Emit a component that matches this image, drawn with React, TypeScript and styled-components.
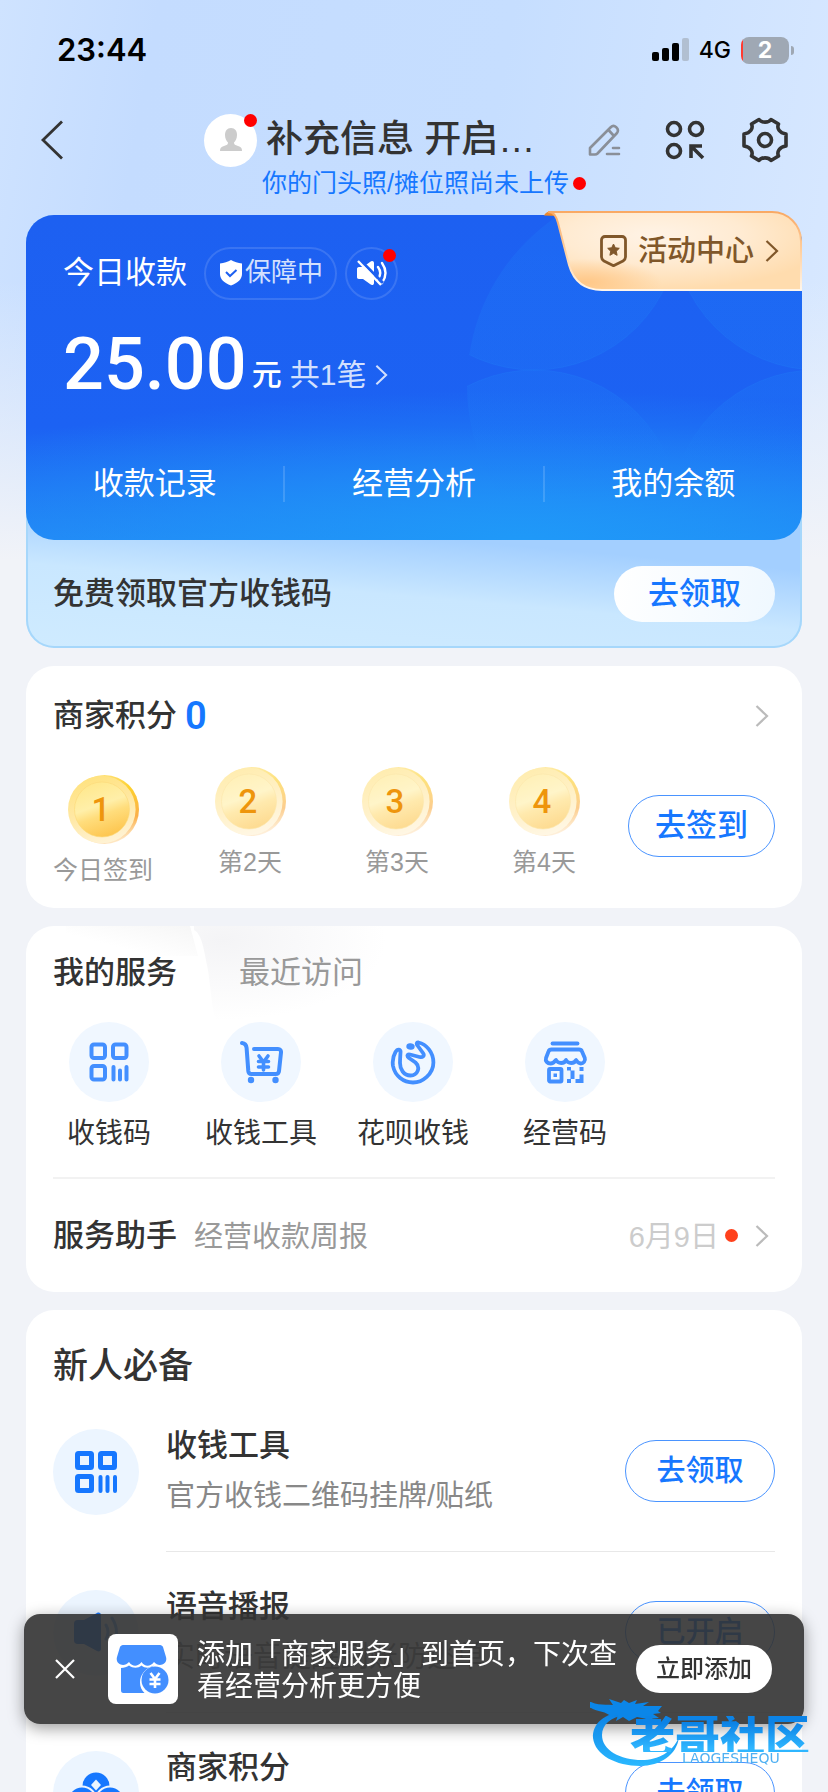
import React from "react";
import styled, { createGlobalStyle, css } from "styled-components";

const BLUE = "#1677ff";
const INK = "#333333";

const GlobalStyle = createGlobalStyle`
  *, *::before, *::after { box-sizing: border-box; }
  body {
    margin: 0;
    background: #f1f3f8;
    color: ${INK};
    font-family: "Liberation Sans", "Noto Sans CJK SC", sans-serif;
    line-height: 1.2;
  }
  button {
    margin: 0;
    padding: 0;
    border: 0;
    background: none;
    color: inherit;
    font: inherit;
    cursor: pointer;
  }
  a { color: inherit; text-decoration: none; }
  h1, h2, h3, p, ul { margin: 0; padding: 0; }
  h1, h2, h3 { font-weight: 500; }
  ul { list-style: none; }
  svg { display: block; flex: none; }
`;

/* ---------- page shell ---------- */

const Screen = styled.div`
  height: 100vh;
  overflow-y: auto;
  scrollbar-width: none;
  background:
    linear-gradient(180deg, rgba(241, 243, 248, 0) 280px, #f1f3f8 560px),
    linear-gradient(100deg, #cfe3ff 0%, #c4dcff 14%, #c6deff 45%, #d6e7ff 75%, #e6f1ff 100%);
`;

const StatusBar = styled.div`
  display: flex;
  align-items: center;
  height: 100px;
  padding: 0 39px 0 57px;
  color: #000;
`;

const Clock = styled.time`
  margin-right: auto;
  font: 600 31px/40px Inter, sans-serif;
`;

const Network = styled.span`
  margin: 0 10px 0 9px;
  font: 500 23px/30px Inter, sans-serif;
`;

const Battery = styled.span`
  position: relative;
  width: 48px;
  height: 27px;
  border-radius: 8px;
  background: linear-gradient(90deg, #ff3b30 2px, #9fa8b4 2px);
  color: #fff;
  font: 700 23px/27px Inter, sans-serif;
  text-align: center;
  &::after {
    content: "";
    position: absolute;
    right: -5px;
    top: 9px;
    width: 3px;
    height: 9px;
    border-radius: 0 4px 4px 0;
    background: #9fa8b4;
  }
`;

const Header = styled.header`
  display: flex;
  align-items: flex-start;
  padding: 14px 40px 17px;
`;

const IconButton = styled.button`
  display: flex;
  align-items: center;
  height: 52px;
`;

const Profile = styled.div`
  margin: 0 2px 0 auto;
`;

const ProfileRow = styled.div`
  display: flex;
  align-items: center;
  gap: 9px;
  height: 52px;
`;

const Avatar = styled.span`
  position: relative;
  display: grid;
  place-items: center;
  width: 53px;
  height: 53px;
  border-radius: 50%;
  background: #fff;
`;

const RedDot = styled.i<{ $tone?: string }>`
  flex: none;
  width: 13px;
  height: 13px;
  border-radius: 50%;
  background: ${(p) => p.$tone ?? "#ff0000"};
`;

const CornerDot = styled(RedDot)`
  position: absolute;
  top: 0;
  right: 0;
`;

const ShopName = styled.h1`
  font-size: 37px;
  line-height: 48px;
`;

const ShopHint = styled.a`
  display: flex;
  align-items: center;
  gap: 4px;
  margin: 2px 0 0 58px;
  color: ${BLUE};
  font-size: 25px;
  line-height: 30px;
`;

const Tools = styled.div`
  display: flex;
  gap: 37px;
`;

const Main = styled.main`
  display: flex;
  flex-direction: column;
  gap: 18px;
  padding: 0 26px 40px;
`;

/* ---------- takings card ---------- */

const Hero = styled.section`
  position: relative;
  border-radius: 28px;
  background: linear-gradient(185deg, #a3cfff 71%, #c9e7ff 83%, #cfebff 100%);
  box-shadow: inset 0 0 0 2px #a6d7fb;
`;

const Takings = styled.div`
  position: relative;
  overflow: hidden;
  padding: 32px 0 36px;
  border-radius: 28px;
  background:
    radial-gradient(ellipse 90% 46% at 64% 100%, #1f99f8 0%, rgba(31, 153, 248, 0.5) 50%, rgba(31, 153, 248, 0) 100%),
    linear-gradient(180deg, #1d60f1 0%, #1c62f3 65%, #2385f5 100%);
  color: #fff;
`;

const Petals = styled.svg`
  position: absolute;
  top: 0;
  right: 0;
`;

const TakingsTop = styled.div`
  position: relative;
  display: flex;
  align-items: center;
  height: 52px;
  padding: 0 37px;
  font-size: 31px;
`;

const Guard = styled.button`
  display: flex;
  align-items: center;
  gap: 2px;
  height: 53px;
  margin: 0 8px 0 17px;
  padding: 0 12px 0 13px;
  border: 2px solid rgba(255, 255, 255, 0.13);
  border-radius: 27px;
  color: #d3e0fd;
  font-size: 26px;
`;

const Mute = styled.button`
  position: relative;
  display: grid;
  place-items: center;
  width: 53px;
  height: 53px;
  border: 2px solid rgba(255, 255, 255, 0.13);
  border-radius: 50%;
`;

const Amount = styled.a`
  position: relative;
  display: flex;
  align-items: flex-end;
  height: 80px;
  margin-top: 26px;
  padding: 0 37px;
  font-size: 30px;
  line-height: 60px;
`;

const Sum = styled.strong`
  margin-right: 5px;
  font: 500 72px/80px Roboto, sans-serif;
`;

const Unit = styled.span`
  font-weight: 500;
`;

const Orders = styled.span`
  display: flex;
  align-items: center;
  gap: 9px;
  margin-left: 8px;
  color: #d3e0fd;
`;

const Actions = styled.nav`
  position: relative;
  display: flex;
  align-items: center;
  height: 40px;
  margin-top: 59px;
`;

const Action = styled.a`
  flex: 1;
  font-size: 31px;
  line-height: 36px;
  text-align: center;
  & + & { border-left: 2px solid rgba(255, 255, 255, 0.15); }
`;

const EventTag = styled.a`
  position: absolute;
  top: -4px;
  right: 0;
  display: flex;
  align-items: center;
  gap: 11px;
  width: 258px;
  height: 80px;
  padding-left: 56px;
  color: #80572a;
  font-size: 29px;
  font-weight: 500;
`;

const TagShape = styled.svg`
  position: absolute;
  inset: 0;
`;

const TagPart = styled.span`
  position: relative;
`;

const Offer = styled.div`
  display: flex;
  align-items: center;
  justify-content: space-between;
  height: 108px;
  padding: 0 27px;
  font-size: 31px;
  font-weight: 500;
`;

const OfferButton = styled.button`
  width: 161px;
  height: 56px;
  border-radius: 28px;
  background: linear-gradient(100deg, #fff, #eff8ff);
  color: ${BLUE};
`;

/* ---------- white cards ---------- */

const Card = styled.section`
  position: relative;
  padding: 29px 27px 0;
  border-radius: 28px;
  background: #fff;
`;

const CardRow = styled.div`
  display: flex;
  align-items: center;
  height: 42px;
`;

const Title = styled.h2`
  font-size: 31px;
  line-height: 40px;
`;

const Points = styled.b`
  margin: 0 auto 0 8px;
  color: ${BLUE};
  font: 600 38px/40px Roboto, sans-serif;
`;

const ChevronSlot = styled.span<{ $gap?: number }>`
  margin: 0 6px 0 ${(p) => p.$gap ?? 0}px;
`;

const CheckIn = styled.div`
  display: flex;
  align-items: center;
  justify-content: space-between;
  padding: 29px 0 23px;
`;

const Days = styled.ul`
  display: flex;
  align-items: flex-start;
  gap: 47px;
`;

const Day = styled.li<{ $today: boolean }>`
  display: flex;
  flex-direction: column;
  align-items: center;
  gap: 10px;
  width: 100px;
  padding-top: ${(p) => (p.$today ? 8 : 0)}px;
  color: #999;
  font-size: 25px;
  line-height: 30px;
`;

const Coin = styled.span`
  position: relative;
  display: grid;
  place-items: center;
  width: 71px;
  height: 71px;
  padding-right: 4px;
  color: #ee950c;
  font: 500 33px/40px Roboto, sans-serif;
  svg { position: absolute; inset: 0; }
  b { position: relative; font-weight: 500; }
`;

const OutlineButton = styled.button<{ $size: "l" | "m" }>`
  flex: none;
  height: 62px;
  border: 1px solid #4a94ff;
  border-radius: 31px;
  color: ${BLUE};
  font-weight: 500;
  ${(p) =>
    p.$size === "l"
      ? css`
          width: 147px;
          font-size: 31px;
        `
      : css`
          width: 150px;
          font-size: 29px;
        `}
`;

const TabShade = styled.svg`
  position: absolute;
  top: 0;
  left: 0;
`;

const Tabs = styled.div`
  position: relative;
  display: flex;
  gap: 62px;
`;

const Tab = styled.button<{ $on?: boolean }>`
  color: ${(p) => (p.$on ? INK : "#999")};
  font-size: 31px;
  font-weight: ${(p) => (p.$on ? 500 : 400)};
  line-height: 36px;
`;

const Services = styled.ul`
  display: flex;
  gap: 40px;
  padding: 31px 0 25px;
  border-bottom: 2px solid #f2f2f2;
`;

const Service = styled.a`
  display: flex;
  flex-direction: column;
  align-items: center;
  gap: 14px;
  width: 112px;
  font-size: 28px;
  line-height: 36px;
  white-space: nowrap;
`;

const Disc = styled.span<{ $size: number; $tone: string }>`
  display: grid;
  flex: none;
  place-items: center;
  width: ${(p) => p.$size}px;
  height: ${(p) => p.$size}px;
  border-radius: 50%;
  background: ${(p) => p.$tone};
`;

const Helper = styled.a`
  display: flex;
  align-items: center;
  height: 113px;
`;

const HelperNote = styled.span`
  margin: 4px auto 0 17px;
  color: #999;
  font-size: 29px;
`;

const HelperDate = styled.time`
  margin: 4px 6px 0 0;
  color: #ccc;
  font-size: 29px;
`;

const StarterTitle = styled.h2`
  padding: 7px 0 5px;
  font-size: 35px;
  line-height: 40px;
`;

const Starter = styled.li`
  display: flex;
  align-items: center;
  gap: 27px;
`;

const StarterBody = styled.div`
  display: flex;
  flex: 1;
  align-items: center;
  justify-content: space-between;
  height: 161px;
  border-bottom: 1px solid #e8e8e8;
`;

const StarterText = styled.div`
  display: flex;
  flex-direction: column;
  gap: 10px;
  line-height: 40px;
  h3 { font-size: 31px; }
  p { color: #888; font-size: 29px; }
`;

/* ---------- floating layers ---------- */

const Toast = styled.aside`
  position: fixed;
  right: 24px;
  bottom: 68px;
  left: 24px;
  display: flex;
  align-items: center;
  height: 110px;
  padding: 0 32px 0 31px;
  border-radius: 16px;
  background: rgba(50, 50, 50, 0.9);
  box-shadow: 0 4px 16px rgba(0, 0, 0, 0.4);
  color: #fff;
`;

const AppIcon = styled.span`
  display: grid;
  flex: none;
  place-items: center;
  width: 70px;
  height: 70px;
  margin: 0 19px 0 33px;
  border-radius: 8px;
  background: #fff;
`;

const ToastText = styled.p`
  flex: 1;
  margin-right: 16px;
  padding-top: 3px;
  font-size: 28px;
  line-height: 32px;
`;

const AddButton = styled.button`
  width: 136px;
  height: 48px;
  border-radius: 24px;
  background: #fff;
  color: ${INK};
  font-size: 24px;
  font-weight: 500;
`;

const Watermark = styled.div`
  position: fixed;
  right: 16px;
  bottom: 20px;
  width: 222px;
  height: 76px;
  padding: 20px 0 0 40px;
  pointer-events: none;
`;

const WatermarkArt = styled.svg`
  position: absolute;
  inset: 0;
`;

const WatermarkName = styled.div`
  position: relative;
  background: linear-gradient(180deg, #0c83e6 20%, #2fb6ff 90%);
  background-clip: text;
  color: transparent;
  font: 900 45px/36px "Noto Sans CJK SC", sans-serif;
  white-space: nowrap;
`;

const WatermarkSub = styled.div`
  position: relative;
  padding-left: 52px;
  color: #4fb0f2;
  font: 400 14px/12px "DejaVu Sans", sans-serif;
`;

/* ---------- icons ---------- */

const Chevron = ({ color, w = 14, h = 22 }: { color: string; w?: number; h?: number }) => (
  <svg width={w} height={h} viewBox="0 0 14 22" fill="none" stroke={color} strokeWidth="2.2">
    <path d="M1.5 1 12 11 1.5 21" />
  </svg>
);

const CoinArt = ({ id, today }: { id: string; today: boolean }) => (
  <svg width="71" height="71" viewBox="0 0 71 71" opacity={today ? 1 : 0.62}>
    <defs>
      <linearGradient id={`${id}e`} x1="0.4" y1="0" x2="0.7" y2="1">
        <stop offset="0" stopColor="#ffe27a" />
        <stop offset="0.3" stopColor="#fdd02c" />
        <stop offset="0.7" stopColor="#fbb04a" />
        <stop offset="1" stopColor="#fff0d8" />
      </linearGradient>
      <linearGradient id={`${id}r`} x1="0.3" y1="0" x2="0.6" y2="1">
        <stop offset="0" stopColor="#ffe27e" />
        <stop offset="0.55" stopColor="#ffe9a8" />
        <stop offset="1" stopColor="#fff3d6" />
      </linearGradient>
      <linearGradient id={`${id}f`} x1="0.3" y1="0" x2="0.65" y2="1">
        <stop offset="0" stopColor="#ffe88c" />
        <stop offset="0.42" stopColor="#ffefa9" />
        <stop offset="0.6" stopColor="#ffdd7c" />
        <stop offset="1" stopColor="#fdc44c" />
      </linearGradient>
    </defs>
    <circle cx="36.5" cy="35.5" r="34.5" fill={`url(#${id}e)`} />
    <circle cx="33.8" cy="35.5" r="33.8" fill={`url(#${id}r)`} />
    <circle cx="34" cy="35.5" r="27.500" fill={`url(#${id}f)`} stroke="#fbd878" strokeOpacity="0.6" />
  </svg>
);

const QrLight = () => (
  <svg width="40" height="40" viewBox="0 0 40 40" fill="none" stroke="#438fff" strokeWidth="4">
    <rect x="2.5" y="2.5" width="13.5" height="13.5" rx="2.5" />
    <rect x="24" y="2.5" width="13.5" height="13.5" rx="2.5" />
    <rect x="2.5" y="24" width="13.5" height="13.5" rx="2.5" />
    <path strokeLinecap="round" d="M24.5 25v12.5M31 28.5v9M37.5 25v12.5" />
  </svg>
);

const Cart = () => (
  <svg width="44" height="44" viewBox="0 0 44 44" fill="none" stroke="#438fff" strokeLinecap="round" strokeLinejoin="round">
    <path strokeWidth="4" d="M3 3c3 .3 4.300 1.500 4.600 5l1.700 23c.2 2 1.200 3 3 3h24.500c2 0 3-1 3.200-3l2-18.500c.2-2-.8-3.500-3-3.500H15" />
    <path strokeWidth="3.600" d="m20 16 4.500 6 4.500-6M19.500 21.500h10M19.500 27h10M24.500 22v8" />
    <circle cx="12" cy="40" r="3.200" fill="#438fff" stroke="none" />
    <circle cx="36.500" cy="40" r="3.200" fill="#438fff" stroke="none" />
  </svg>
);

const Huabei = () => (
  <svg width="46" height="46" viewBox="-1 -1 46 46" fill="none" stroke="#438fff" strokeWidth="3.800" strokeLinejoin="round">
    <path d="M9.500 12.500C10 9 6.500 8.500 4.500 12 1.500 17 1.400 22 2 26c2 10 10.500 16.500 20 16.500S42.400 34 42.400 22.500C42.400 12 35 4 27.500 2.500c-2-.3-2.200 1.500-1 3l5.500 7.500c2 3-.5 4.800-3.500 4L19 14.500c-2.800-.6-3.500 1.500-1 3.500l6.500 4.500c5.500 5 2 13-5 13C12.500 35.500 9 29 9 23c0-4 .3-7 .5-10.500Z" />
    <ellipse cx="19.500" cy="6.500" rx="4.200" ry="3.200" fill="#438fff" stroke="none" transform="rotate(8 19.500 6.500)" />
  </svg>
);

const StoreQr = () => (
  <svg width="46" height="46" viewBox="-1 -1 46 46" fill="none" stroke="#438fff" strokeWidth="3.800" strokeLinejoin="round">
    <path strokeLinecap="round" d="M9.500 3.500h25" />
    <path d="M8.500 9.500h27.500c1.500 0 2.500.6 3 2l2.800 6.500c1 3-1.500 5.500-4 5.500-2.500 0-3.500-1.500-4.800-3.500-1.500 4-8 4-10 0-1.500 4-8 4-10 0-1.500 2-3 3.500-5.500 3.500-3 0-5.500-2.500-4.500-5.500L5.500 11.500c.5-1.400 1.500-2 3-2Z" />
    <rect x="6" y="29" width="12.500" height="12.500" rx="1" />
    <path strokeWidth="0" fill="#438fff" d="M10.500 33.500h3.500v3.500h-3.500zM24 27h4v3.500h-4zM27.500 30.500h4v8.500h-4zM24 39h4v4h-4zM36.500 27h4v4h-4zM36.500 34.500h4v8.500H32.500v-4h4z" />
  </svg>
);

const QrBold = () => (
  <svg width="44" height="44" viewBox="0 0 44 44" fill="none" stroke={BLUE} strokeWidth="5">
    <rect x="3.500" y="3.500" width="14" height="14" rx="1" />
    <rect x="26.500" y="3.500" width="14" height="14" rx="1" />
    <rect x="3.500" y="26.500" width="14" height="14" rx="1" />
    <path strokeWidth="4" strokeLinecap="round" d="M26.500 27v14M33.500 27v14M41 27v14" />
  </svg>
);

const Speaker = () => (
  <svg width="46" height="42" viewBox="0 0 46 42">
    <path fill={BLUE} d="M5 8h6L24 1c2-1 4 0 4 2v34c0 2-2 3-4 2l-13-7H5c-3 0-4-1.500-4-4V12c0-2.500 1-4 4-4Z" />
    <path fill="none" stroke={BLUE} strokeWidth="3" strokeLinecap="round" opacity="0.600" d="M33 13q4 7 0 14M39 6q9 14 0 29" />
  </svg>
);

const Clover = () => (
  <svg width="50" height="46" viewBox="0 0 50 46">
    <g fill={BLUE} stroke="#ecf5ff" strokeWidth="2">
      <circle cx="25" cy="15" r="14.500" />
      <circle cx="11" cy="30" r="14.500" />
      <circle cx="39" cy="30" r="14.500" />
    </g>
    <path fill="#ecf5ff" d="m25 8.500 5 5.500-5 5.500-5-5.500z" />
  </svg>
);

const StoreApp = () => (
  <svg width="54" height="52" viewBox="0 0 54 52">
    <path fill="#438fff" d="M7 2h37c1.500 0 2.500 1 3 2l3 10c2 7-7 11-12 5-4 5-9 5-12.500 0-4 5-9 5-12.500 0-5 6-14 2-12-5L4 4c.5-1 1.500-2 3-2Z" />
    <path fill="#438fff" d="M5 25c3 0 6-1 8-2.500 4 3 9 3 12.500 0 3.500 3 8 3 12.500 0-9 3-14 9-14 17 0 4 1.500 8 4.500 10.500H7.500C5.500 50 5 49 5 47Z" />
    <circle cx="39" cy="37" r="13.500" fill="#438fff" />
    <path fill="none" stroke="#fff" strokeWidth="2.600" d="m34.500 30 4.500 6 4.500-6M33.500 36.500h11M33.500 41h11M39 36v9" />
  </svg>
);

/* ---------- data ---------- */

const days = [
  { n: 1, label: "今日签到" },
  { n: 2, label: "第2天" },
  { n: 3, label: "第3天" },
  { n: 4, label: "第4天" },
];

const services = [
  { label: "收钱码", icon: <QrLight /> },
  { label: "收钱工具", icon: <Cart /> },
  { label: "花呗收钱", icon: <Huabei /> },
  { label: "经营码", icon: <StoreQr /> },
];

const starters = [
  { title: "收钱工具", note: "官方收钱二维码挂牌/贴纸", action: "去领取", icon: <QrBold /> },
  { title: "语音播报", note: "实时语音提醒到账防逃单", action: "已开启", icon: <Speaker /> },
  { title: "商家积分", note: "签到领积分兑好礼", action: "去领取", icon: <Clover /> },
];

export default function App() {
  return (
    <Screen>
      <GlobalStyle />
      <StatusBar>
        <Clock>23:44</Clock>
        <svg width="38" height="24" viewBox="0 0 38 24">
          <rect x="0" y="14" width="7" height="9" rx="2" />
          <rect x="10" y="10" width="7" height="13" rx="2" />
          <rect x="20" y="5" width="7" height="18" rx="2" />
          <rect x="30" y="0" width="7" height="23" rx="2" fill="#b1bfd1" />
        </svg>
        <Network>4G</Network>
        <Battery>2</Battery>
      </StatusBar>

      <Header>
        <IconButton aria-label="返回">
          <svg width="26" height="40" viewBox="0 0 26 40" fill="none" stroke="#333" strokeWidth="2.800">
            <path d="M22 1.500 3 20 22 38.500" />
          </svg>
        </IconButton>
        <Profile>
          <ProfileRow>
            <Avatar>
              <svg width="24" height="26" viewBox="0 0 24 26" fill="#ccc">
                <path d="M12 1c4 0 6 3 6 7 0 3.500-1.500 6-3 7.500 0 2 1 2.500 4 3.500 3 1 4 2 4 5H1c0-3 1-4 4-5 3-1 4-1.500 4-3.500C7.500 14 6 11.500 6 8c0-4 2-7 6-7Z" />
              </svg>
              <CornerDot />
            </Avatar>
            <ShopName>补充信息 开启…</ShopName>
          </ProfileRow>
          <ShopHint href="#photo">
            你的门头照/摊位照尚未上传
            <RedDot />
          </ShopHint>
        </Profile>
        <Tools>
          <IconButton aria-label="编辑">
            <svg width="40" height="34" viewBox="0 0 40 34" fill="none" stroke="#8a8f98" strokeWidth="2.600" strokeLinejoin="round" strokeLinecap="round">
              <path d="M2 31.500v-6.500L23 4c3-3 9 1.500 6 6L9.500 30.500c-.6.600-1.500 1-2.500 1ZM20.500 7l5.500 6" />
              <path d="M25 25h6M19 31h12" />
            </svg>
          </IconButton>
          <IconButton aria-label="扫一扫">
            <svg width="40" height="40" viewBox="0 0 40 40" fill="none" stroke="#333" strokeWidth="3.600">
              <circle cx="9" cy="9" r="6.500" />
              <circle cx="31" cy="9" r="6.500" />
              <circle cx="9" cy="31" r="6.500" />
              <path d="M26 38V26h11M26.500 26.500 38 38" />
            </svg>
          </IconButton>
          <IconButton aria-label="设置">
            <svg width="46" height="46" viewBox="0 0 46 46" fill="none" stroke="#333" strokeWidth="3.600" strokeLinejoin="round">
              <path d="M17 2.500c2.500 3.500 9.500 3.500 12 0l7.500 4.500c-2 4.500 1 9 7.500 10v12c-6.500 1-9.500 5.500-7.500 10L29 43.500c-2.500-3.500-9.500-3.500-12 0L9.500 39C11.500 34.500 8.500 30 2 29V17c6.500-1 9.500-5.500 7.500-10Z" />
              <circle cx="23" cy="23" r="6.500" />
            </svg>
          </IconButton>
        </Tools>
      </Header>

      <Main>
        <Hero>
          <Takings>
            <Petals width="336" height="325" viewBox="0 0 336 325">
              <defs>
                <clipPath id="ring">
                  <circle cx="204" cy="170" r="203" />
                </clipPath>
                <linearGradient id="petalFill" gradientUnits="userSpaceOnUse" x1="0" y1="0" x2="0" y2="300">
                  <stop offset="0" stopColor="#1f80f8" stopOpacity="0.240" />
                  <stop offset="0.600" stopColor="#1f80f8" stopOpacity="0.260" />
                  <stop offset="0.950" stopColor="#1f80f8" stopOpacity="0" />
                </linearGradient>
              </defs>
              <g clipPath="url(#ring)" fill="url(#petalFill)" stroke="url(#petalFill)">
                <circle cx="68" cy="10" r="145" />
                <circle cx="352" cy="10" r="145" />
                <circle cx="68" cy="300" r="145" />
                <circle cx="350" cy="300" r="145" />
              </g>
            </Petals>
            <TakingsTop>
              今日收款
              <Guard>
                <svg width="24" height="26" viewBox="0 0 24 26">
                  <path fill="#fff" d="M12 0c3 2 7 3 11 3.500V14c0 5-4 9-11 11.500C5 23 1 19 1 14V3.500C5 3 9 2 12 0Z" />
                  <path fill="none" stroke="#1d60f1" strokeWidth="2" d="m7 12 4 4 6.500-6" />
                </svg>
                保障中
              </Guard>
              <Mute aria-label="语音播报已关闭">
                <svg width="32" height="28" viewBox="0 0 32 28">
                  <path fill="#fff" d="M3 8h4l7-5c2-2 4-1 4 1v20c0 2-2 3-4 1l-7-5H3c-1.500 0-2-1-2-2v-8c0-1 .5-2 2-2Z" />
                  <path fill="none" stroke="#fff" strokeWidth="2.400" strokeLinecap="round" d="M22 8q4.500 6 0 12M26 4q7 10 0 20" />
                  <path stroke="#1d60f1" strokeWidth="3" d="m4 1 23 23" />
                  <path stroke="#fff" strokeWidth="2.400" d="m2 2 23 24" />
                </svg>
                <CornerDot />
              </Mute>
            </TakingsTop>
            <Amount href="#today">
              <Sum>25.00</Sum>
              <Unit>元</Unit>
              <Orders>
                共1笔
                <Chevron color="#d3e0fd" w={13} />
              </Orders>
            </Amount>
            <Actions>
              <Action href="#records">收款记录</Action>
              <Action href="#analysis">经营分析</Action>
              <Action href="#balance">我的余额</Action>
            </Actions>
          </Takings>
          <EventTag href="#events">
            <TagShape width="258" height="80" viewBox="0 0 258 80">
              <defs>
                <radialGradient id="tagFill" cx="0.420" cy="0.300" r="0.700">
                  <stop offset="0" stopColor="#fff3e6" />
                  <stop offset="0.500" stopColor="#ffebd2" />
                  <stop offset="1" stopColor="#ffdcae" />
                </radialGradient>
                <radialGradient id="tagGlow" cx="0.150" cy="0.900" r="0.300">
                  <stop offset="0" stopColor="#ffc583" stopOpacity="0.900" />
                  <stop offset="1" stopColor="#ffc583" stopOpacity="0" />
                </radialGradient>
                <linearGradient id="tagEdge" x1="0" y1="0" x2="0" y2="1">
                  <stop offset="0" stopColor="#f9a964" />
                  <stop offset="0.500" stopColor="#ffd0a0" />
                  <stop offset="1" stopColor="#fff6ea" />
                </linearGradient>
              </defs>
              <path d="M0 4.500C2 1 5 0 9 0s5 3 5 5Z" fill="#ee8a2c" />
              <path d="M4 1h224a29 29 0 0 1 29 29v49H58C38 79 29 68 25 54L14 12C12 5 10 1 4 1Z" fill="url(#tagFill)" />
              <path d="M4 1h224a29 29 0 0 1 29 29v49H58C38 79 29 68 25 54L14 12C12 5 10 1 4 1Z" fill="url(#tagGlow)" stroke="url(#tagEdge)" strokeWidth="2" />
            </TagShape>
            <TagPart>
              <svg width="27" height="32" viewBox="0 0 27 32" fill="none" stroke="#80572a" strokeWidth="2.800" strokeLinejoin="round">
                <path d="M5 1.500h17c2 0 3.500 1.500 3.500 3.500v17c0 2-1 3-2.500 4l-9.500 4.700L4 26c-1.500-1-2.500-2-2.500-4V5c0-2 1.500-3.500 3.500-3.500Z" />
                <path fill="#80572a" strokeWidth="1" d="m13.500 9 1.800 3.800 4 .5-3 2.900.8 4.100-3.600-2-3.600 2 .8-4.100-3-2.900 4-.5z" />
              </svg>
            </TagPart>
            <TagPart>活动中心</TagPart>
            <TagPart>
              <Chevron color="#80572a" />
            </TagPart>
          </EventTag>
          <Offer>
            免费领取官方收钱码
            <OfferButton>去领取</OfferButton>
          </Offer>
        </Hero>

        <Card>
          <CardRow>
            <Title>商家积分</Title>
            <Points>0</Points>
            <ChevronSlot>
              <Chevron color="#bbb" />
            </ChevronSlot>
          </CardRow>
          <CheckIn>
            <Days>
              {days.map((d, i) => (
                <Day key={d.n} $today={i === 0}>
                  <Coin>
                    <CoinArt id={`coin${d.n}`} today={i === 0} />
                    <b>{d.n}</b>
                  </Coin>
                  {d.label}
                </Day>
              ))}
            </Days>
            <OutlineButton $size="l">去签到</OutlineButton>
          </CheckIn>
        </Card>

        <Card>
          <TabShade width="400" height="100" viewBox="0 0 400 100">
            <defs>
              <radialGradient id="shadeR" cx="0.150" cy="0.150" r="0.850">
                <stop offset="0" stopColor="#f4f4f6" />
                <stop offset="1" stopColor="#fff" />
              </radialGradient>
              <linearGradient id="shadeL" x1="1" y1="0" x2="0.300" y2="0.600">
                <stop offset="0" stopColor="#f6f6f6" />
                <stop offset="1" stopColor="#fff" />
              </linearGradient>
            </defs>
            <path d="M40 0h124l8 30H40Z" fill="url(#shadeL)" />
            <path d="M168 4c8 4 10 20 14 40 3 20 4 40 8 50h170V0H168Z" fill="url(#shadeR)" />
          </TabShade>
          <Tabs>
            <Tab $on>我的服务</Tab>
            <Tab>最近访问</Tab>
          </Tabs>
          <Services>
            {services.map((s) => (
              <li key={s.label}>
                <Service href="#service">
                  <Disc $size={80} $tone="#f0f7ff">
                    {s.icon}
                  </Disc>
                  {s.label}
                </Service>
              </li>
            ))}
          </Services>
          <Helper href="#helper">
            <Title>服务助手</Title>
            <HelperNote>经营收款周报</HelperNote>
            <HelperDate>6月9日</HelperDate>
            <RedDot $tone="#ff411c" />
            <ChevronSlot $gap={17}>
              <Chevron color="#bbb" />
            </ChevronSlot>
          </Helper>
        </Card>

        <Card>
          <StarterTitle>新人必备</StarterTitle>
          <ul>
            {starters.map((s) => (
              <Starter key={s.title}>
                <Disc $size={86} $tone="#ecf5ff">
                  {s.icon}
                </Disc>
                <StarterBody>
                  <StarterText>
                    <h3>{s.title}</h3>
                    <p>{s.note}</p>
                  </StarterText>
                  <OutlineButton $size="m">{s.action}</OutlineButton>
                </StarterBody>
              </Starter>
            ))}
          </ul>
        </Card>
      </Main>

      <Toast>
        <button aria-label="关闭">
          <svg width="20" height="20" viewBox="0 0 20 20" stroke="#fff" strokeWidth="2.200">
            <path d="m1 1 18 18M19 1 1 19" />
          </svg>
        </button>
        <AppIcon>
          <StoreApp />
        </AppIcon>
        <ToastText>添加「商家服务」到首页，下次查看经营分析更方便</ToastText>
        <AddButton>立即添加</AddButton>
      </Toast>

      <Watermark>
        <WatermarkArt width="222" height="76" viewBox="0 0 222 76">
          <defs>
            <linearGradient id="dragon" x1="0" y1="0" x2="0" y2="1">
              <stop offset="0" stopColor="#0a7fe4" />
              <stop offset="1" stopColor="#2ab8ff" />
            </linearGradient>
          </defs>
          <path
            fill="url(#dragon)"
            d="M36 15C14 17 2 28 3 42c2 17 23 28 47 28 20 0 37-11 39-29-6 15-21 23-37 23C30 64 12 54 12 39c0-10 8-18 24-20Z"
          />
          <path
            fill="#0b86e8"
            d="M1 6c8 4 14 2 22 3l-4-6 12 4 3-3 5 3 8-3-2 4 14-2-6 4h19l-4 5 3 2-8 1 6 4-12 1-10-2-8 4-6-4-7 4 2-6-7 2c-4-6-14-5-20-9-3-1-6-2-5-6Z"
          />
        </WatermarkArt>
        <WatermarkName>老哥社区</WatermarkName>
        <WatermarkSub>LAOGESHEQU</WatermarkSub>
      </Watermark>
    </Screen>
  );
}
